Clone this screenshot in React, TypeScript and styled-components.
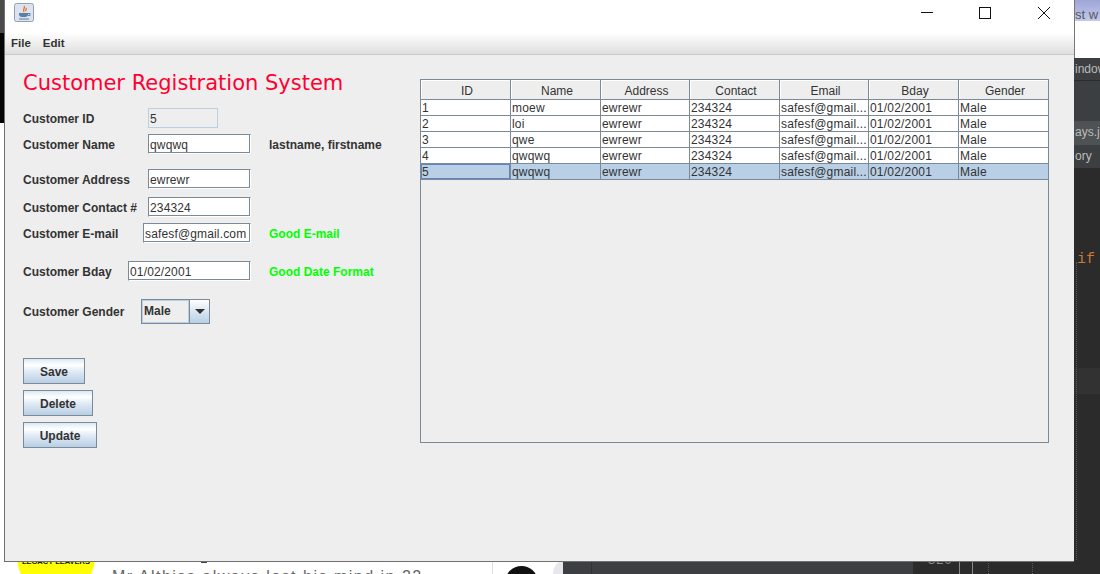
import { createGlobalStyle, styled } from "styled-components";

const columns = [
  { title: "ID", width: 90 },
  { title: "Name", width: 90 },
  { title: "Address", width: 89 },
  { title: "Contact", width: 90 },
  { title: "Email", width: 89 },
  { title: "Bday", width: 90 },
  { title: "Gender", width: 90 },
];

const customers = [
  ["1", "moew"],
  ["2", "loi"],
  ["3", "qwe"],
  ["4", "qwqwq"],
  ["5", "qwqwq"],
];

const GlobalStyle = createGlobalStyle`
  html, body {
    margin: 0;
    padding: 0;
    width: 1100px;
    height: 574px;
    overflow: hidden;
    background: #ffffff;
  }
`;

const Desktop = styled.div`
  position: relative;
  width: 1100px;
  height: 574px;
  overflow: hidden;
  font-family: "Liberation Sans", Arial, sans-serif;
`;

/* things left showing around the app window */
const Patch = styled.div<{ $x: number; $y: number; $w: number; $h: number; $bg: string }>`
  position: absolute;
  left: ${({ $x }) => $x}px;
  top: ${({ $y }) => $y}px;
  width: ${({ $w }) => $w}px;
  height: ${({ $h }) => $h}px;
  background: ${({ $bg }) => $bg};
`;

const DottedRule = styled.div<{ $x: number; $y: number }>`
  position: absolute;
  left: ${({ $x }) => $x}px;
  top: ${({ $y }) => $y}px;
  bottom: 0;
  border-left: 1px dotted #5a5a5a;
`;

const BackText = styled.div<{ $x: number; $y: number; $color: string; $size: number; $mono?: boolean; $spacing?: number }>`
  position: absolute;
  left: ${({ $x }) => $x}px;
  top: ${({ $y }) => $y}px;
  color: ${({ $color }) => $color};
  font-size: ${({ $size }) => $size}px;
  letter-spacing: ${({ $spacing }) => $spacing ?? 0}px;
  line-height: 1;
  white-space: nowrap;
  font-family: ${({ $mono }) => ($mono ? '"Liberation Mono", monospace' : '"Liberation Sans", sans-serif')};
`;

const Badge = styled.div`
  position: absolute;
  left: 17px;
  top: 518px;
  width: 78px;
  height: 78px;
  border-radius: 50%;
  background: #ffff00;
  color: #111111;
  font-size: 7.5px;
  line-height: 9px;
  font-weight: 700;
  text-align: center;
  white-space: nowrap;
  padding-top: 39px;
  box-sizing: border-box;
`;

const Avatar = styled.div`
  position: absolute;
  left: 505px;
  top: 566px;
  width: 33px;
  height: 33px;
  border-radius: 50%;
  background: radial-gradient(circle at 50% 0%, #111111 0 44%, #6aa6d6 50%);
`;

const CornerArc = styled.div`
  position: absolute;
  left: 553px;
  top: 561px;
  width: 10px;
  height: 13px;
  background: #e6e6ec;
  border-top-left-radius: 100%;
`;

const Window = styled.div`
  position: absolute;
  left: 4px;
  top: 0;
  width: 1070px;
  height: 562px;
  box-sizing: border-box;
  display: flex;
  flex-direction: column;
  background: #eeeeee;
  border-left: 1px solid #707070;
  border-bottom: 1px solid #707070;
`;

const TitleBar = styled.div`
  height: 33px;
  flex: none;
  display: flex;
  align-items: flex-start;
  justify-content: space-between;
  background: #ffffff;
  padding-left: 9px;
`;

const AppIcon = styled.svg`
  width: 20px;
  height: 19px;
  margin-top: 3px;
`;

const Controls = styled.div`
  display: flex;
`;

const ControlIcon = styled.svg`
  width: 59px;
  height: 26px;
  fill: none;
  stroke: #111111;
  stroke-width: 1;
`;

const MenuBar = styled.div`
  height: 20px;
  padding: 0 0 1px 6px;
  flex: none;
  display: flex;
  align-items: center;
  gap: 12px;
  background: linear-gradient(#ffffff 0%, #f0f0f0 45%, #dedede 100%);
  border-bottom: 1px solid #c9c9c9;
  font-size: 11.5px;
  font-weight: 700;
  color: #333333;
`;

const Content = styled.div`
  flex: 1;
  min-height: 0;
  display: flex;
  padding: 15px 0 0 18px;
`;

const FormColumn = styled.div`
  width: 397px;
  flex: none;
  display: flex;
  flex-direction: column;
  align-items: flex-start;
`;

const Heading = styled.h1`
  margin: 0 0 14px;
  height: 24px;
  font-family: "DejaVu Sans", sans-serif;
  font-size: 21px;
  line-height: 26px;
  font-weight: 400;
  color: #ff0033;
  white-space: nowrap;
`;

const Row = styled.div<{ $fieldX: number; $after: number }>`
  display: grid;
  grid-template-columns: ${({ $fieldX }) => $fieldX}px auto auto;
  align-items: center;
  margin-bottom: ${({ $after }) => $after}px;
`;

const Label = styled.label<{ $flush?: boolean }>`
  padding-top: ${({ $flush }) => ($flush ? 0 : 2)}px;
  font-size: 12px;
  font-weight: 700;
  color: #333333;
  white-space: nowrap;
`;

const Field = styled.div<{ $width: number; $readOnly?: boolean }>`
  width: ${({ $width }) => $width}px;
  height: 20px;
  box-sizing: border-box;
  padding: 2px 0 0 1px;
  font-size: 12px;
  line-height: 17px;
  letter-spacing: 0.15px;
  color: #333333;
  white-space: nowrap;
  overflow: hidden;
  background: ${({ $readOnly }) => ($readOnly ? "#eeeeee" : "#ffffff")};
  border: 1px solid ${({ $readOnly }) => ($readOnly ? "#b8cfe5" : "#7a8a99")};
  border-right-color: ${({ $readOnly }) => ($readOnly ? "#b8cfe5" : "#ffffff")};
  border-bottom-color: ${({ $readOnly }) => ($readOnly ? "#b8cfe5" : "#ffffff")};
  box-shadow: ${({ $readOnly }) => ($readOnly ? "none" : "inset -1px -1px 0 #7a8a99")};
`;

const Hint = styled.span<{ $good?: boolean }>`
  margin-left: 18px;
  padding-top: 2px;
  font-size: 12px;
  font-weight: 700;
  white-space: nowrap;
  color: ${({ $good }) => ($good ? "#00ff00" : "#333333")};
`;

const Combo = styled.div`
  width: 69px;
  height: 25px;
  box-sizing: border-box;
  display: flex;
  border: 1px solid #7a8a99;
`;

const ComboValue = styled.div`
  flex: 1;
  border: 1px solid #b8cfe5;
  padding-left: 1px;
  font-size: 12px;
  font-weight: 700;
  line-height: 21px;
  color: #333333;
  background: #eeeeee;
`;

const ComboArrow = styled.div`
  width: 19px;
  flex: none;
  display: flex;
  align-items: center;
  justify-content: center;
  border-left: 1px solid #7a8a99;
  background: linear-gradient(#ffffff 0%, #dde8f3 45%, #b8cfe5 100%);

  &::after {
    content: "";
    border-left: 5px solid transparent;
    border-right: 5px solid transparent;
    border-top: 5px solid #333333;
  }
`;

const Button = styled.button<{ $width: number }>`
  width: ${({ $width }) => $width}px;
  height: 26px;
  margin: 0 0 6px;
  padding: 2px 0 0;
  border: 1px solid #7a8a99;
  background: linear-gradient(#dde8f3 0%, #ffffff 25%, #dde8f3 55%, #b8cfe5 100%);
  font-family: inherit;
  font-size: 12px;
  font-weight: 700;
  color: #333333;
`;

const TablePane = styled.div`
  width: 629px;
  height: 364px;
  margin-top: 9px;
  box-sizing: border-box;
  border: 1px solid #7a8a99;
`;

const Grid = styled.table`
  border-collapse: separate;
  border-spacing: 0;
  table-layout: fixed;
  width: 627px;
  font-size: 12px;
  color: #333333;
`;

const HeadCell = styled.th`
  height: 20px;
  box-sizing: border-box;
  padding: 2px 0 0 3px;
  font-weight: 400;
  text-align: center;
  background: #eeeeee;
  border-right: 1px solid #7a8a99;
  border-bottom: 1px solid #7a8a99;
  box-shadow: inset 1px 1px 0 #ffffff;
`;

const Cell = styled.td<{ $selected: boolean; $focused?: boolean }>`
  height: 16px;
  box-sizing: border-box;
  padding: 1px 0 0 1px;
  line-height: 14px;
  white-space: nowrap;
  overflow: hidden;
  letter-spacing: 0.2px;
  background: ${({ $selected }) => ($selected ? "#b8cfe5" : "#ffffff")};
  border-right: 1px solid #7a8a99;
  border-bottom: 1px solid #7a8a99;
  box-shadow: ${({ $focused }) => ($focused ? "inset 0 0 0 1px #6382bf" : "none")};
`;

export default function App() {
  return (
    <>
      <GlobalStyle />
      <Desktop>
        <Patch $x={0} $y={0} $w={4} $h={33} $bg="#4a4a4a" />
        <Patch $x={0} $y={33} $w={4} $h={90} $bg="#050505" />
        <Patch $x={1074} $y={0} $w={1} $h={58} $bg="#777777" />
        <Patch $x={1075} $y={0} $w={25} $h={21} $bg="linear-gradient(#9da6d8, #c5c9e8)" />
        <BackText $x={1075} $y={8} $color="#55586a" $size={13}>st w</BackText>
        <Patch $x={1074} $y={58} $w={26} $h={516} $bg="#2b2b2b" />
        <Patch $x={1074} $y={58} $w={26} $h={22} $bg="#3c3f41" />
        <Patch $x={1074} $y={81} $w={26} $h={40} $bg="#3c3f41" />
        <Patch $x={1074} $y={121} $w={26} $h={24} $bg="#4e5254" />
        <Patch $x={1074} $y={145} $w={26} $h={23} $bg="#3c3f41" />
        <Patch $x={1074} $y={368} $w={26} $h={26} $bg="#323232" />
        <BackText $x={1075} $y={63} $color="#bbbbbb" $size={12}>indow</BackText>
        <BackText $x={1075} $y={126} $color="#bbbbbb" $size={12}>ays.java</BackText>
        <BackText $x={1075} $y={150} $color="#bbbbbb" $size={12}>ory</BackText>
        <BackText $x={1077} $y={252} $color="#cc7832" $size={15} $mono>if</BackText>
        <DottedRule $x={1076} $y={262} />
        <Patch $x={563} $y={561} $w={350} $h={13} $bg="#3c3f41" />
        <Patch $x={591} $y={561} $w={1} $h={13} $bg="#2f3133" />
        <Patch $x={913} $y={561} $w={187} $h={13} $bg="#2b2b2b" />
        <BackText $x={928} $y={553} $color="#8a8a8a" $size={13} $spacing={1}>320</BackText>
        <Patch $x={959} $y={561} $w={1} $h={13} $bg="#8a8a8a" />
        <Patch $x={972} $y={561} $w={1} $h={13} $bg="#8a8a8a" />
        <DottedRule $x={988} $y={561} />
        <DottedRule $x={1032} $y={561} />
        <Patch $x={492} $y={561} $w={1} $h={13} $bg="#e0e0e0" />
        <Patch $x={201} $y={561} $w={6} $h={2} $bg="#444444" />
        <Badge>LEGACY LEAVERS</Badge>
        <BackText $x={112} $y={569} $color="#666666" $size={16} $spacing={1.5}>Mr Althiss always lost his mind in 22</BackText>
        <Avatar />
        <CornerArc />
        <Window>
          <TitleBar>
            <AppIcon viewBox="0 0 20 19">
              <rect x="0.5" y="0.5" width="19" height="18" rx="2" fill="#dbe4ee" stroke="#8fa2b5" />
              <path d="M10 3c2 2-2 3 0 6M12 5c1 1-1 2 0 3" fill="none" stroke="#e2762a" strokeWidth="1.4" />
              <path d="M5 10h9v2a3 3 0 0 1-3 2H8a3 3 0 0 1-3-2z" fill="#5a7fa0" />
              <path d="M14 10.500h2v2h-2M5 16h10" fill="none" stroke="#5a7fa0" />
            </AppIcon>
            <Controls>
              <ControlIcon viewBox="0 0 59 26">
                <path d="M24 12.5h12" />
              </ControlIcon>
              <ControlIcon viewBox="0 0 59 26">
                <rect x="23.5" y="7.5" width="11" height="11" />
              </ControlIcon>
              <ControlIcon viewBox="0 0 59 26">
                <path d="M23 7l12 12M35 7L23 19" />
              </ControlIcon>
            </Controls>
          </TitleBar>
          <MenuBar>
            <span>File</span>
            <span>Edit</span>
          </MenuBar>
          <Content>
            <FormColumn>
              <Heading>Customer Registration System</Heading>
              <Row $fieldX={125} $after={6}>
                <Label>Customer ID</Label>
                <Field $width={70} $readOnly>5</Field>
              </Row>
              <Row $fieldX={125} $after={15}>
                <Label>Customer Name</Label>
                <Field $width={103}>qwqwq</Field>
                <Hint>lastname, firstname</Hint>
              </Row>
              <Row $fieldX={125} $after={8}>
                <Label>Customer Address</Label>
                <Field $width={103}>ewrewr</Field>
              </Row>
              <Row $fieldX={125} $after={6}>
                <Label>Customer Contact #</Label>
                <Field $width={103}>234324</Field>
              </Row>
              <Row $fieldX={120} $after={18}>
                <Label>Customer E-mail</Label>
                <Field $width={108}>safesf@gmail.com</Field>
                <Hint $good>Good E-mail</Hint>
              </Row>
              <Row $fieldX={105} $after={18}>
                <Label>Customer Bday</Label>
                <Field $width={123}>01/02/2001</Field>
                <Hint $good>Good Date Format</Hint>
              </Row>
              <Row $fieldX={118} $after={34}>
                <Label $flush>Customer Gender</Label>
                <Combo>
                  <ComboValue>Male</ComboValue>
                  <ComboArrow />
                </Combo>
              </Row>
              <Button $width={62}>Save</Button>
              <Button $width={70}>Delete</Button>
              <Button $width={74}>Update</Button>
            </FormColumn>
            <TablePane>
              <Grid>
                <colgroup>
                  {columns.map((column) => (
                    <col key={column.title} style={{ width: column.width }} />
                  ))}
                </colgroup>
                <thead>
                  <tr>
                    {columns.map((column) => (
                      <HeadCell key={column.title}>{column.title}</HeadCell>
                    ))}
                  </tr>
                </thead>
                <tbody>
                  {customers.map(([id, name]) => {
                    const selected = id === "5";
                    return (
                      <tr key={id}>
                        <Cell $selected={selected} $focused={selected}>{id}</Cell>
                        <Cell $selected={selected}>{name}</Cell>
                        <Cell $selected={selected}>ewrewr</Cell>
                        <Cell $selected={selected}>234324</Cell>
                        <Cell $selected={selected}>safesf@gmail...</Cell>
                        <Cell $selected={selected}>01/02/2001</Cell>
                        <Cell $selected={selected}>Male</Cell>
                      </tr>
                    );
                  })}
                </tbody>
              </Grid>
            </TablePane>
          </Content>
        </Window>
      </Desktop>
    </>
  );
}
